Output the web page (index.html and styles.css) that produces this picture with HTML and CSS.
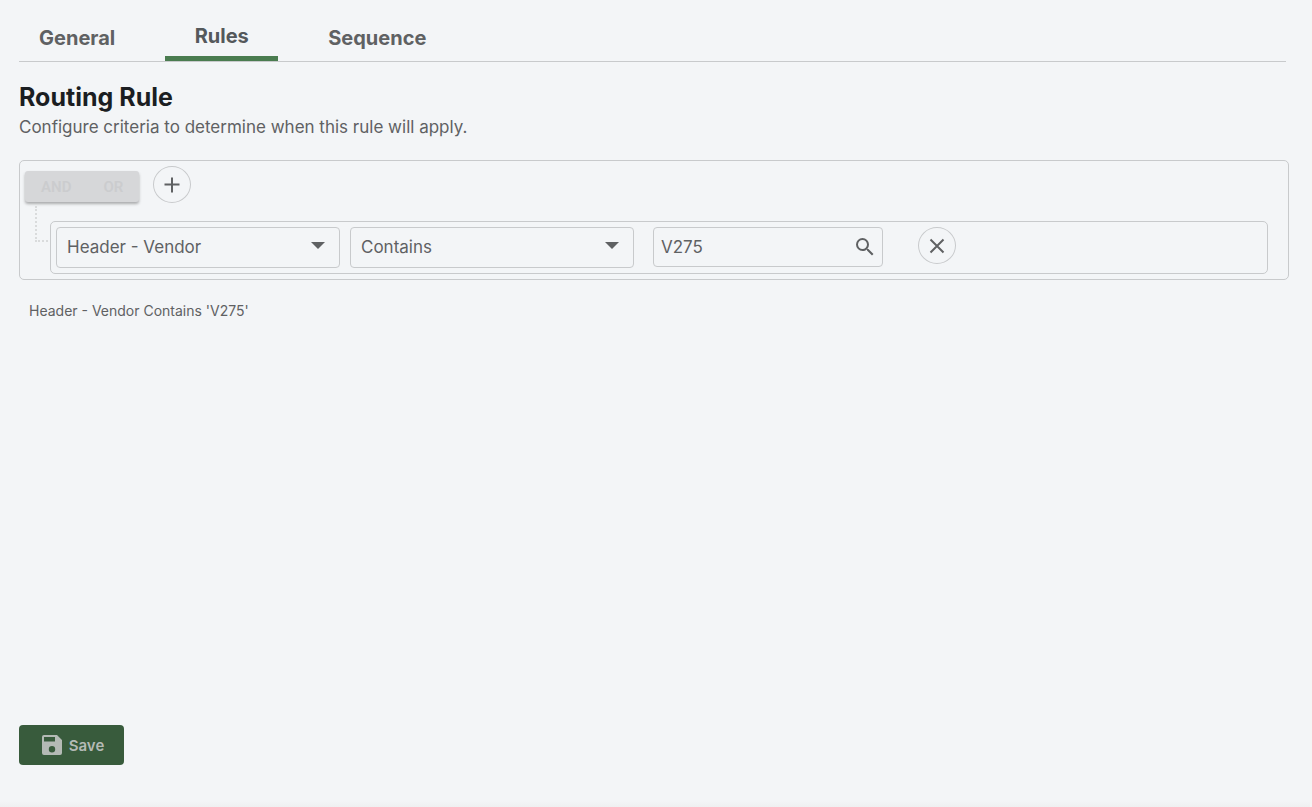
FILE: index.html
```html
<!DOCTYPE html>
<html lang="en">
<head>
<meta charset="UTF-8" />
<meta name="viewport" content="width=device-width, initial-scale=1" />
<title>Routing Rule</title>
<link rel="stylesheet" href="styles.css">
</head>
<body>

<div class="page">
  <nav class="tabs">
    <a href="#general" class="tab">General</a>
    <a href="#rules" class="tab active">Rules</a>
    <a href="#sequence" class="tab">Sequence</a>
  </nav>

  <main class="content">
    <h1>Routing Rule</h1>
    <p class="subtitle">Configure criteria to determine when this rule will apply.</p>

    <!-- Filter group -->
    <div class="group">
      <div class="group-header">
        <div class="operators">
          <button type="button" disabled>AND</button>
          <button type="button" disabled>OR</button>
        </div>
        <button type="button" class="round" aria-label="Add condition">
          <svg width="16" height="16" viewBox="0 0 16 16"><path d="M8 0.500v15M0.500 7.500h15" /></svg>
        </button>
      </div>

      <div class="group-body">
        <div class="connector"></div>
        <div class="rule">
          <div class="select-box">
            <select aria-label="Field">
              <option>Header - Vendor</option>
            </select>
            <svg class="arrow" width="14" height="7" viewBox="0 0 14 7"><path d="M0 0h14L7 7z" /></svg>
          </div>
          <div class="select-box">
            <select aria-label="Operator">
              <option>Contains</option>
            </select>
            <svg class="arrow" width="14" height="7" viewBox="0 0 14 7"><path d="M0 0h14L7 7z" /></svg>
          </div>
          <div class="value-box">
            <input type="text" value="V275" aria-label="Value" />
            <button type="button" class="search" aria-label="Search">
              <svg width="24" height="24" viewBox="0 0 24 24"><path d="M15.5 14h-.79l-.28-.27A6.47 6.47 0 0 0 16 9.5 6.5 6.5 0 1 0 9.5 16c1.61 0 3.09-.59 4.23-1.57l.27.28v.79l5 4.99L20.49 19l-4.99-5zm-6 0C7.01 14 5 11.99 5 9.5S7.01 5 9.5 5 14 7.01 14 9.5 11.99 14 9.5 14z" /></svg>
            </button>
          </div>
          <button type="button" class="round remove" aria-label="Remove condition">
            <svg width="16" height="16" viewBox="0 0 16 16"><path d="M1.500 1.500l13 13M14.500 1.500l-13 13" /></svg>
          </button>
        </div>
      </div>
    </div>

    <p class="summary">Header - Vendor Contains 'V275'</p>
  </main>

  <footer class="actions">
    <button type="button" class="save" disabled>
      <svg width="20" height="20" viewBox="0 0 20 20"><path fill-rule="evenodd" d="M2 0h13l5 5v13a2 2 0 0 1-2 2H2a2 2 0 0 1-2-2V2a2 2 0 0 1 2-2zM2 2v4.500h11V2zM10 11a3.200 3.200 0 1 0 0 6.400 3.200 3.200 0 0 0 0-6.400z" /></svg>
      Save
    </button>
  </footer>
</div>

</body>
</html>
```
FILE: styles.css
```css
* {
  box-sizing: border-box;
}
body {
  margin: 0;
  background: #f3f5f7;
  color: #5f6163;
  font-family: Inter, "Liberation Sans", sans-serif;
  font-size: 17px;
}
button,
input,
select {
  font-family: inherit;
  color: inherit;
}
.page {
  display: flex;
  flex-direction: column;
  min-height: 100vh;
  padding: 16px 21px 42px 19px;
  border-right: 2px solid #f5f5f5;
  background: linear-gradient(to top, #eff0f1, #f3f5f7 6px);
}

/* Tabs */
.tabs {
  display: flex;
  gap: 30px;
  height: 46px;
  margin-right: 3px;
  border-bottom: 1px solid #c8cacc;
}
.tab {
  padding: 10px 20px 0;
  color: #5f6163;
  font-size: 20px;
  font-weight: 700;
  line-height: 24px;
  text-decoration: none;
}
.tab.active {
  min-width: 113px;
  padding-top: 8px;
  border-bottom: 5px solid #4a7c50;
  color: #54585b;
  text-align: center;
}

/* Headings */
.content {
  flex: 1;
}
h1 {
  margin: 19px 0 0;
  color: #1b1e22;
  font-size: 25px;
  font-weight: 700;
  line-height: 32px;
}
.subtitle {
  margin: 2px 0 21px;
  font-size: 17px;
  line-height: 24px;
}

/* Filter group */
.group {
  padding: 5px 20px 5px 5px;
  border: 1px solid #c8cacc;
  border-radius: 5px;
}
.group-header {
  display: flex;
  align-items: flex-end;
  gap: 14px;
}
.operators {
  display: flex;
  margin-bottom: 1px;
  border-radius: 3px;
  background: #d6d7d9;
  box-shadow: 0 2px 3px rgb(0 0 0 / 0.3);
}
.operators button {
  height: 31px;
  padding: 0 16px;
  border: none;
  background: none;
  color: #cbccce;
  font-family: Roboto, sans-serif;
  font-size: 15px;
  font-weight: 600;
}
.round {
  display: flex;
  align-items: center;
  justify-content: center;
  width: 38px;
  height: 37px;
  padding: 0;
  border: 1px solid #c8cacc;
  border-radius: 50%;
  background: none;
}
.round svg {
  fill: none;
  stroke: #5f6163;
  stroke-width: 2;
}
.group-body {
  display: flex;
}
.connector {
  width: 13px;
  height: 36px;
  margin: 3px 2px 0 10px;
  border-left: 2px dotted #d9dbdc;
  border-bottom: 2px dotted #d9dbdc;
}
.rule {
  display: flex;
  flex: 1;
  gap: 10px;
  margin-top: 18px;
  padding: 5px;
  border: 1px solid #c8cacc;
  border-radius: 5px;
}
.select-box {
  position: relative;
  width: 284px;
}
.select-box select {
  width: 100%;
  height: 41px;
  padding: 0 36px 1px 10px;
  border: 1px solid #c8cacc;
  border-radius: 4px;
  background: none;
  font-size: 17px;
  appearance: none;
}
.arrow {
  position: absolute;
  top: 15px;
  right: 15px;
  fill: #5f6163;
  pointer-events: none;
}
.value-box {
  display: flex;
  align-items: center;
  width: 230px;
  height: 40px;
  margin-left: 9px;
  padding: 0 5px 1px 7px;
  border: 1px solid #c8cacc;
  border-radius: 4px;
}
.value-box input {
  flex: 1;
  min-width: 0;
  padding: 0;
  border: none;
  outline: none;
  background: none;
  font-size: 17px;
}
.search {
  display: flex;
  padding: 0;
  border: none;
  background: none;
}
.search svg {
  fill: #5f6163;
}
.remove {
  margin-left: 25px;
}
.summary {
  margin: 21px 10px;
  font-size: 14px;
  line-height: 20px;
}

/* Footer */
.save {
  display: flex;
  align-items: center;
  justify-content: center;
  gap: 7px;
  width: 105px;
  height: 40px;
  padding: 0 0 0 3px;
  border: none;
  border-radius: 4px;
  background: #385b3c;
  color: #b4bab5;
  font-size: 15px;
  font-weight: 600;
}
.save svg {
  fill: #b4bab5;
}
```
